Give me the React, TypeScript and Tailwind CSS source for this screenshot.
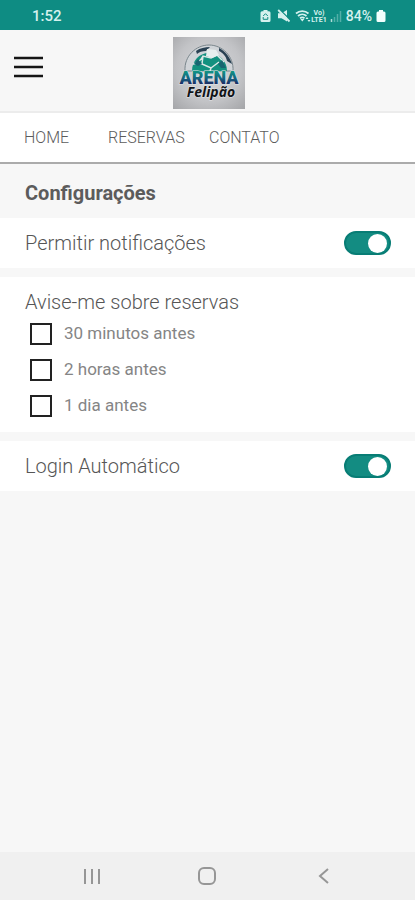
import { useState } from "react";

const reminders = ["30 minutos antes", "2 horas antes", "1 dia antes"];

function StatusBar() {
  return (
    <div className="flex h-[30px] shrink-0 items-center justify-between bg-[#0e8c83] pt-0.5 pr-[29px] pl-8 text-[#d5f1ee]">
      <span className="text-[15px] leading-none font-medium">1:52</span>
      <div className="flex items-center">
        <svg width="11" height="14" viewBox="0 0 11 14" aria-hidden="true">
          <path d="M3.5 1h4v1.3H9a1.5 1.5 0 0 1 1.5 1.5v7.7A1.5 1.5 0 0 1 9 13H2a1.500 1.500 0 0 1-1.500-1.500V3.800A1.500 1.500 0 0 1 2 2.300h1.500z" fill="currentColor" />
          <path d="M3.200 7 5.500 4.700 7.800 7M3.200 8v2.300h4.600V8" fill="none" stroke="#0e8c83" strokeWidth="1" />
        </svg>
        <svg className="ml-1.5" width="14" height="14" viewBox="0 0 14 14" aria-hidden="true">
          <path d="M1 4.300h3.500L10 1v11.500L4.500 9.300H1z" fill="currentColor" />
          <path d="M2.500 .5 14 11.500" stroke="#0e8c83" strokeWidth="1.300" />
          <path d="M1.200 1 12.500 12.500" stroke="currentColor" strokeWidth="1.800" />
        </svg>
        <svg className="ml-1" width="16" height="14" viewBox="0 0 16 14" aria-hidden="true">
          <path d="M1 4.500a9.500 9.500 0 0 1 12.500 0M3 7a6.500 6.500 0 0 1 8.500 0M5 9.300a3.500 3.500 0 0 1 4.500 0" fill="none" stroke="currentColor" strokeWidth="1.800" />
          <path d="m5.300 10 2 2.500 2-2.500zM10.500 10l1.500-2 1.500 2zM12.500 11l1.500 2 1.500-2z" fill="currentColor" />
        </svg>
        <svg width="17" height="14" viewBox="0 0 17 14" aria-hidden="true">
          <text x="8" y="6" textAnchor="middle" fontSize="7" fontWeight="700" fill="currentColor">Vo)</text>
          <text x="8" y="13" textAnchor="middle" fontSize="7" fontWeight="700" fill="currentColor">LTE1</text>
        </svg>
        <svg className="ml-0.5" width="12" height="14" viewBox="0 0 12 14" aria-hidden="true">
          <path d="M1.500 10v3" stroke="currentColor" strokeWidth="1.500" opacity=".8" />
          <path d="M4.500 8v5M7.500 5v8M10.500 2v11" stroke="currentColor" strokeWidth="1.500" opacity=".35" />
        </svg>
        <span className="ml-1 text-sm leading-none font-medium">84%</span>
        <svg className="ml-1" width="10" height="14" viewBox="0 0 10 14" aria-hidden="true">
          <path d="M3 1h4v1.500h1A1.500 1.500 0 0 1 9.500 4v7.500A1.500 1.500 0 0 1 8 13H2A1.500 1.500 0 0 1 .5 11.500V4A1.500 1.500 0 0 1 2 2.500h1z" fill="#f1fffd" />
        </svg>
      </div>
    </div>
  );
}

function Logo() {
  return (
    <svg width="72" height="72" viewBox="0 0 72 72" role="img" aria-label="Arena Felipão">
      <defs>
        <radialGradient id="plate" cx=".5" cy=".45" r=".75">
          <stop offset="0" stopColor="#d9dadd" />
          <stop offset=".6" stopColor="#c2c3c6" />
          <stop offset="1" stopColor="#a3a4a7" />
        </radialGradient>
        <linearGradient id="letters" x1="0" y1="0" x2="0" y2="1">
          <stop offset=".2" stopColor="#0f9484" />
          <stop offset=".55" stopColor="#17627f" />
          <stop offset=".85" stopColor="#1b2260" />
        </linearGradient>
      </defs>
      <rect width="72" height="72" fill="url(#plate)" />
      <path d="M12 34C11 19 23 8 36 8s25 11 24 26z" fill="#d0d4d8" stroke="#7a868c" strokeWidth="1" />
      <path d="M19 34c0-10 7-18 17-18s18 8 18 18z" fill="#13917f" />
      <path d="M23 14c4-3 9-4 14-4l-4 4c-4 0-7 1-9 3zM46 11c6 3 11 9 13 16l-5-3c-1-5-4-8-8-10z" fill="#294153" />
      <path d="M20 27c5-1 8-4 10-8l8 2 6-3 7 7M30 19l-1 8 9 4 8-6M20 27l9 0M38 31l-1 3" fill="none" stroke="#dce8e6" strokeWidth="1.500" />
      <path d="m34 12 9 1 3 5-7 3-6-2z" fill="#e8efee" />
      <path d="m25 22-4 5 4 2 4-2zM49 23l-4 4 3 4h5z" fill="#176671" />
      <text x="36" y="47" textAnchor="middle" fontSize="18" fontWeight="900" fill="url(#letters)" stroke="#dfe5e8" strokeWidth="1" paintOrder="stroke">ARENA</text>
      <text x="38" y="60" textAnchor="middle" fontFamily="'Open Sans', sans-serif" fontSize="14" fontWeight="700" fontStyle="italic" fill="#111318" stroke="#e3e5e8" strokeWidth="1" paintOrder="stroke">Felipão</text>
    </svg>
  );
}

function SwitchRow({ label }: { label: string }) {
  const [on, setOn] = useState(true);
  return (
    <label className="flex h-[50px] items-center justify-between bg-white pr-6 pl-[25px] text-xl font-light text-[#565656]">
      {label}
      <input
        type="checkbox"
        role="switch"
        checked={on}
        onChange={(e) => setOn(e.target.checked)}
        className="flex h-6 w-[47px] shrink-0 appearance-none items-center rounded-full border-2 border-[#087d75] bg-[#138c82] px-0.5 before:size-[19px] before:rounded-full before:bg-white before:content-[''] checked:justify-end not-checked:bg-gray-400"
      />
    </label>
  );
}

export default function App() {
  return (
    <div className="flex min-h-screen flex-col bg-[#f7f7f7] font-['Roboto',sans-serif]">
      <StatusBar />
      <header className="grid h-[83px] shrink-0 grid-cols-[1fr_auto_1fr] items-center border-b-2 border-[#ececec] pt-1 pr-3 pl-3.5">
        <button type="button" aria-label="Menu" className="justify-self-start pb-3">
          <svg width="29" height="22" viewBox="0 0 29 22" aria-hidden="true">
            <path d="M0 2h29M0 11h29M0 20h29" stroke="#161616" strokeWidth="2.500" />
          </svg>
        </button>
        <Logo />
      </header>
      <nav className="flex h-[51px] shrink-0 items-center border-b-2 border-[#ababab] bg-white px-6 text-base font-light text-[#5c5c5c]">
        <a href="#home" className="w-[84px]">HOME</a>
        <a href="#reservas" className="w-[101px]">RESERVAS</a>
        <a href="#contato">CONTATO</a>
      </nav>
      <main className="flex grow flex-col">
        <h1 className="flex h-[54px] items-center pt-1 pl-[25px] text-xl font-bold text-[#5c5c5c]">Configurações</h1>
        <div className="flex flex-col gap-[9px]">
          <SwitchRow label="Permitir notificações" />
          <fieldset className="bg-white pt-[11px] pb-2 pl-[25px]">
            <legend className="float-left w-full text-xl leading-7 font-light text-[#565656]">Avise-me sobre reservas</legend>
            <div className="clear-both">
              {reminders.map((text) => (
                <label key={text} className="flex h-9 items-center gap-3 pl-[5px] text-[17px] text-[#858585]">
                  <input type="checkbox" className="size-[22px] appearance-none border-2 border-[#222] bg-white checked:bg-[#138c82]" />
                  {text}
                </label>
              ))}
            </div>
          </fieldset>
          <SwitchRow label="Login Automático" />
        </div>
      </main>
      <footer className="grid h-12 shrink-0 grid-cols-3 items-center justify-items-center bg-[#f0f0f0] px-[34px] text-[#969696]">
        <button type="button" aria-label="Recentes">
          <svg width="18" height="18" viewBox="0 0 18 18" fill="none" stroke="currentColor" strokeWidth="2" aria-hidden="true">
            <path d="M2 2v15M9 2v15M16 2v15" />
          </svg>
        </button>
        <button type="button" aria-label="Início">
          <svg width="18" height="18" viewBox="0 0 18 18" fill="none" stroke="currentColor" strokeWidth="2" aria-hidden="true">
            <rect x="1" y="1" width="16" height="16" rx="5" />
          </svg>
        </button>
        <button type="button" aria-label="Voltar">
          <svg width="18" height="18" viewBox="0 0 18 18" fill="none" stroke="currentColor" strokeWidth="2" aria-hidden="true">
            <path d="M14 2 6 9l8 7" />
          </svg>
        </button>
      </footer>
    </div>
  );
}
